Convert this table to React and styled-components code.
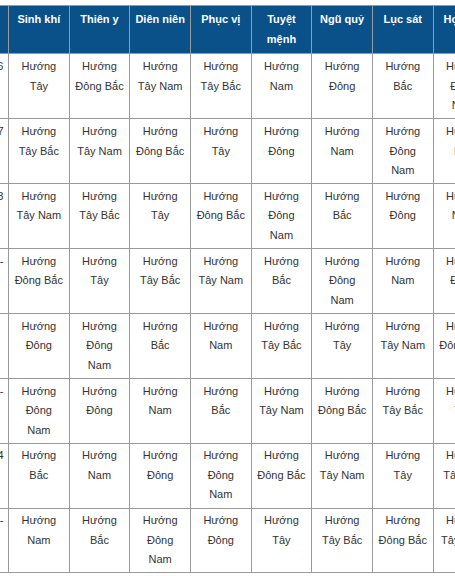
import React from "react";
import styled, { createGlobalStyle } from "styled-components";

const Global = createGlobalStyle`
  html, body { margin: 0; padding: 0; background: #fff; }
  body { font-family: "Liberation Sans", Arial, sans-serif; }
`;

const Viewport = styled.div`
  width: 455px;
  height: 576px;
  overflow: hidden;
  padding-top: 5px;
  box-sizing: border-box;
`;

const Table = styled.table`
  border-collapse: collapse;
  table-layout: fixed;
  width: ${(p) => p.$width}px;
  margin-left: ${(p) => p.$shift}px;
  font-size: 11px;
  line-height: 19.5px;
  color: #333;
`;

const Col = styled.col`
  width: ${(p) => p.$w}px;
`;

const HeadCell = styled.th`
  background: #0a5089;
  color: #fff;
  font-weight: bold;
  text-align: center;
  vertical-align: top;
  padding: 4.3px 4.5px 4.2px;
  border: 1px solid #9a9a9a;
`;

const Cell = styled.td`
  text-align: ${(p) => (p.$lead ? "right" : "center")};
  vertical-align: top;
  padding: 2.7px 4.5px;
  border: 1px solid #9a9a9a;
  white-space: ${(p) => (p.$lead ? "pre" : "normal")};
`;

const headers = [
  "Sinh khí",
  "Thiên y",
  "Diên niên",
  "Phục vị",
  "Tuyệt mệnh",
  "Ngũ quỷ",
  "Lục sát",
  "Họa hại",
];

const rows = [
  { lead: "Càn – 1946", dirs: ["Tây", "Đông Bắc", "Tây Nam", "Tây Bắc", "Nam", "Đông", "Bắc", "Đông Nam"] },
  { lead: "Đoài – 1947", dirs: ["Tây Bắc", "Tây Nam", "Đông Bắc", "Tây", "Đông", "Nam", "Đông Nam", "Bắc"] },
  { lead: "Cấn – 1938", dirs: ["Tây Nam", "Tây Bắc", "Tây", "Đông Bắc", "Đông Nam", "Bắc", "Đông", "Nam"] },
  { lead: "Khôn -", dirs: ["Đông Bắc", "Tây", "Tây Bắc", "Tây Nam", "Bắc", "Đông Nam", "Nam", "Đông"] },
  { lead: "Ly    ", dirs: ["Đông", "Đông Nam", "Bắc", "Nam", "Tây Bắc", "Tây", "Tây Nam", "Đông Bắc"] },
  { lead: "Khảm -", dirs: ["Đông Nam", "Đông", "Nam", "Bắc", "Tây Nam", "Đông Bắc", "Tây Bắc", "Tây"] },
  { lead: "Tốn – 1944", dirs: ["Bắc", "Nam", "Đông", "Đông Nam", "Đông Bắc", "Tây Nam", "Tây", "Tây Bắc"] },
  { lead: "Chấn -", dirs: ["Nam", "Bắc", "Đông Nam", "Đông", "Tây", "Tây Bắc", "Đông Bắc", "Tây Nam"] },
];

const LEAD_W = 80;
const COL_W = 60.667;
const SHIFT = -72;

export default function App() {
  return (
    <>
      <Global />
      <Viewport>
        <Table $width={LEAD_W + COL_W * headers.length} $shift={SHIFT}>
          <colgroup>
            <Col $w={LEAD_W} />
            {headers.map((h) => (
              <Col key={h} $w={COL_W} />
            ))}
          </colgroup>
          <thead>
            <tr>
              <HeadCell>Cung</HeadCell>
              {headers.map((h) => (
                <HeadCell key={h}>{h}</HeadCell>
              ))}
            </tr>
          </thead>
          <tbody>
            {rows.map((r, i) => (
              <tr key={i}>
                <Cell $lead>{r.lead}</Cell>
                {r.dirs.map((d, j) => (
                  <Cell key={j}>Hướng {d}</Cell>
                ))}
              </tr>
            ))}
          </tbody>
        </Table>
      </Viewport>
    </>
  );
}
